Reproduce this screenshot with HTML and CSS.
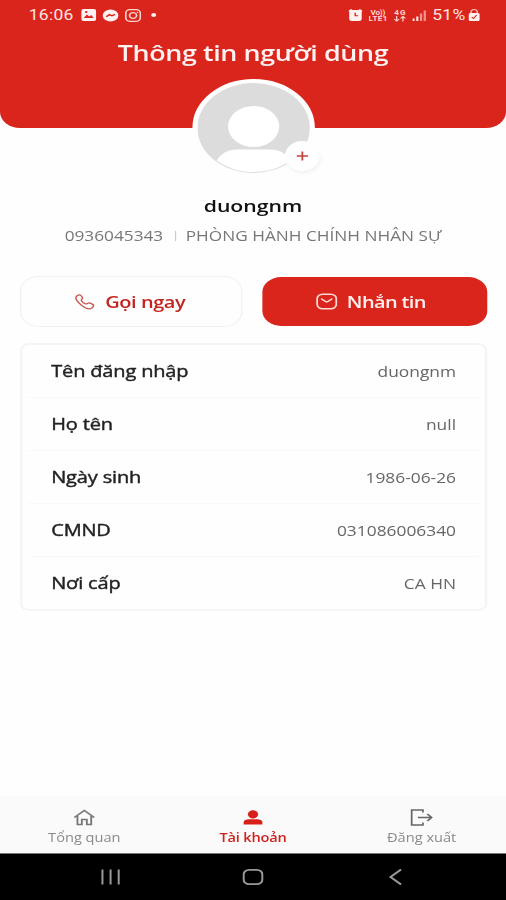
FILE: index.html
```html
<!DOCTYPE html>
<html lang="vi">
  <head>
    <meta charset="utf-8">
    <title>Thông tin người dùng</title>
    <meta name="viewport" content="width=device-width, initial-scale=1.0">
    <link rel="stylesheet" href="styles.css">
  </head>
  <body>
    <div class="screen">
      <header class="header">
        <div class="status">
          <div class="status-left">
            <span class="time">16:06</span>
            <svg width="12" height="12" viewBox="0 0 12 12">
              <rect width="12" height="12" rx="2" fill="#fff2f0"/>
              <path d="M2 9l2.5-3.5 2 2 1.5-1.5L10 9z" fill="#da251d"/>
              <circle cx="4" cy="3" r="1" fill="#da251d"/>
            </svg>
            <svg width="13" height="13" viewBox="0 0 13 13">
              <ellipse cx="6.5" cy="6.4" rx="6.3" ry="6" fill="#fff2f0"/>
              <path d="M3 7.8l2.6-2.2 2 1.2L10 5.4" fill="none" stroke="#da251d" stroke-width="1.4"/>
            </svg>
            <svg width="13" height="13" viewBox="0 0 13 13" fill="none" stroke="#fbd5d0" stroke-width="1.3">
              <rect x=".7" y=".7" width="11.6" height="11.6" rx="3.2"/>
              <circle cx="6.5" cy="6.5" r="2.8"/>
              <path d="M9.5 3.3h1"/>
            </svg>
            <span class="dot"></span>
          </div>
          <div class="status-right">
            <svg width="11" height="12" viewBox="0 0 11 12">
              <rect x=".5" y="1" width="10" height="11" rx="2" fill="#fff2f0"/>
              <path d="M0 2.5L2.5.5M8.5.5L11 2.5" stroke="#fff2f0" stroke-width="1.4"/>
              <path d="M5.3 3.8v3h2.4" fill="none" stroke="#da251d" stroke-width="1.1"/>
            </svg>
            <svg class="volte" width="15" height="13" viewBox="0 0 15 13">
              <text x="1.5" y="5.8" textLength="12">Vo))</text>
              <text x="0" y="12.3" textLength="15">LTE1</text>
            </svg>
            <svg class="volte" width="10" height="13" viewBox="0 0 10 13">
              <text x=".5" y="6" textLength="9">4G</text>
              <path d="M2.5 7v5M.5 10l2 2 2-2M7.5 12.5v-5M5.5 9.5l2-2 2 2" fill="none" stroke="#fbd5d0"/>
            </svg>
            <svg width="11" height="12" viewBox="0 0 11 12">
              <path d="M1 12V9.5M4 12V7.5" stroke="#fff2f0" stroke-width="1.6"/>
              <path d="M7 12V4.5M10 12V1.5" stroke="#ee938d" stroke-width="1.8"/>
            </svg>
            <span class="percent">51%</span>
            <svg width="9" height="12" viewBox="0 0 9 12">
              <path d="M2 5V3a2.5 2.5 0 0 1 5 0v2" fill="none" stroke="#f6b6b0" stroke-width="1.2"/>
              <rect y="4" width="9" height="8" rx="1.5" fill="#fff2f0"/>
              <path d="M2.5 8L4 9.5 6.5 6" fill="none" stroke="#da251d"/>
            </svg>
          </div>
        </div>
        <h1 class="title">Thông tin người dùng</h1>
      </header>

      <section class="profile">
        <div class="avatar">
          <svg width="90" height="90" viewBox="0 0 90 90">
            <clipPath id="face"><circle cx="45" cy="45" r="44"/></clipPath>
            <circle cx="45" cy="45" r="45" fill="#dcdcdd"/>
            <circle cx="45" cy="43.5" r="20.5" fill="#fff"/>
            <rect x="14" y="66.5" width="62" height="40" rx="18" fill="#fff" clip-path="url(#face)"/>
          </svg>
          <span class="add">
            <svg width="10" height="10" viewBox="0 0 10 10" stroke="#c4403c" stroke-width="1.4">
              <path d="M5 .5v9M.5 5h9"/>
            </svg>
          </span>
        </div>
        <div class="name">duongnm</div>
        <div class="info">
          <span>0936045343</span>
          <span class="sep"></span>
          <span>PHÒNG HÀNH CHÍNH NHÂN SỰ</span>
        </div>
      </section>

      <div class="actions">
        <button class="btn call">
          <svg width="16" height="16" viewBox="0 0 17 17" fill="none" stroke="#c65550" stroke-width="1.3" stroke-linejoin="round">
            <path d="M1.2 2.8C2 1.2 3.6.6 4.6 1.2c1.2 1 2 2.4 1.8 3.4-.2.8-1.2 1.2-1 2.2.4 1.400 2.400 3.400 3.800 3.800 1 .2 1.400-.8 2.200-1 1-.2 2.800.6 4 1.800.8.9.2 2.600-1.400 3.800-2 1.200-5.200 0-8.600-3.400S0 4.800 1.200 2.800z"/>
          </svg>
          <span>Gọi ngay</span>
        </button>
        <button class="btn message">
          <svg width="17" height="17" viewBox="0 0 17 17" fill="none" stroke="#ffd9d5" stroke-width="1.5" stroke-linecap="round">
            <rect x=".8" y="1.2" width="15.4" height="14.6" rx="4.5"/>
            <path d="M4.5 6l2.7 2.3c.8.7 1.8.7 2.6 0L12.500 6"/>
          </svg>
          <span>Nhắn tin</span>
        </button>
      </div>

      <div class="card">
        <div class="row"><span class="label">Tên đăng nhập</span><span class="value">duongnm</span></div>
        <div class="row"><span class="label">Họ tên</span><span class="value">null</span></div>
        <div class="row"><span class="label">Ngày sinh</span><span class="value">1986-06-26</span></div>
        <div class="row"><span class="label">CMND</span><span class="value">031086006340</span></div>
        <div class="row"><span class="label">Nơi cấp</span><span class="value">CA HN</span></div>
      </div>

      <nav class="tabs">
        <a class="tab">
          <svg width="17" height="17" viewBox="0 0 17 17" fill="none" stroke="#777" stroke-width="1.5">
            <path d="M.5 8.5l8-7 8 7M3 7v8.5h3.5v-5h4v5H14V7"/>
          </svg>
          <span>Tổng quan</span>
        </a>
        <a class="tab active">
          <svg width="17" height="17" viewBox="0 0 17 17" fill="#d8201a">
            <circle cx="8.5" cy="5.3" r="4.1"/>
            <path d="M1 15.5v-2C1 11.5 3 10.3 5.5 10.3h6c2.5 0 4.5 1.2 4.5 3.2v2z"/>
          </svg>
          <span>Tài khoản</span>
        </a>
        <a class="tab">
          <svg width="19" height="17" viewBox="0 0 19 17" fill="none" stroke="#666" stroke-width="1.4">
            <path d="M10.5 3.5V1h-9v15h9v-2.5M6.5 8.5h11M14 5l3.5 3.5L14 12"/>
          </svg>
          <span>Đăng xuất</span>
        </a>
      </nav>

      <div class="android">
        <svg width="17" height="18" viewBox="0 0 17 18" stroke="#999" stroke-width="1.6">
          <path d="M2 1.5v15M8.5 1.5v15M15 1.5v15"/>
        </svg>
        <svg width="17" height="18" viewBox="0 0 17 18" fill="none" stroke="#999" stroke-width="1.7">
          <rect x="1" y="1.8" width="15" height="14.4" rx="4.5"/>
        </svg>
        <svg width="17" height="18" viewBox="0 0 17 18" fill="none" stroke="#999" stroke-width="1.7">
          <path d="M13 1.5L4.5 9l8.5 7.5"/>
        </svg>
      </div>
    </div>
  </body>
</html>
```
FILE: styles.css
```css
* {
  box-sizing: border-box;
}

body {
  margin: 0;
  overflow: hidden;
  background-color: #fefefe;
  font-family: "Open Sans", "Noto Sans", sans-serif;
}

svg {
  display: block;
  flex: none;
}

.screen {
  width: 405px;
  height: 900px;
  display: flex;
  flex-direction: column;
  transform: scaleX(1.2494);
  transform-origin: 0 0;
}

.header {
  height: 128px;
  flex: none;
  background-color: #da251d;
  border-radius: 0 0 16px 16px;
}

.status {
  display: flex;
  justify-content: space-between;
  height: 30px;
  padding: 0 21px 0 23px;
  font-family: Roboto, sans-serif;
  font-size: 14px;
  color: #ffe6e3;
}

.status-left, .status-right {
  display: flex;
  align-items: center;
  gap: 5px;
}

.time {
  width: 37px;
  letter-spacing: 0.2px;
}

.dot {
  width: 4px;
  height: 4px;
  margin-left: 3px;
  border-radius: 50%;
  background-color: #fff2f0;
}

.percent {
  width: 26px;
  margin-right: -2px;
  letter-spacing: 0.2px;
}

.volte {
  font-size: 6.5px;
  font-weight: 700;
  fill: #fbd5d0;
}

.title {
  margin: 5px 0 0;
  font-size: 21.5px;
  line-height: 36px;
  font-weight: 600;
  letter-spacing: -0.32px;
  text-align: center;
  color: #fff2f0;
}

.profile {
  display: flex;
  flex-direction: column;
  align-items: center;
  height: 197px;
  margin-top: -49px;
  flex: none;
}

.avatar {
  position: relative;
  flex: none;
  border: 4px solid #fefefe;
  border-radius: 50%;
  background-color: #fefefe;
}

.add {
  position: absolute;
  right: -8px;
  bottom: 2px;
  width: 28px;
  height: 30px;
  display: flex;
  align-items: center;
  justify-content: center;
  border-radius: 50%;
  background-color: #fefefe;
  box-shadow: 1px 3px 3px #f4f4f4;
}

.name {
  margin-top: 15px;
  font-size: 17px;
  line-height: 27px;
  font-weight: 600;
  color: #111;
}

.info {
  display: flex;
  align-items: center;
  margin-top: 7px;
  font-size: 13.8px;
  line-height: 20px;
  color: #777;
}

.sep {
  width: 1px;
  height: 10px;
  margin: 0 8px 0 9px;
  background-color: #ccc;
}

.actions {
  display: flex;
  gap: 16px;
  height: 51px;
  padding: 0 15px 0 16px;
  flex: none;
}

.btn {
  flex: 1;
  display: flex;
  align-items: center;
  justify-content: center;
  gap: 8px;
  padding: 0 1px 0 0;
  border: 1px solid #f1f1f3;
  border-radius: 15px;
  background-color: #fefefe;
  color: #c4241f;
  font-family: inherit;
  font-size: 16px;
  font-weight: 600;
  letter-spacing: -0.35px;
}

.message {
  margin: 1px 0;
  padding-right: 6px;
  border: none;
  background-color: #da251d;
  color: #ffefed;
  letter-spacing: -0.5px;
}

.card {
  height: 268px;
  margin: 16px 15px 0 16px;
  flex: none;
  border: 2px solid #f5f5f6;
  border-radius: 7px;
  display: flex;
  flex-direction: column;
}

.row {
  flex: 1;
  display: flex;
  align-items: center;
  justify-content: space-between;
  margin: 0 5px;
  padding: 0 18px;
  border-bottom: 1px solid #f8f8f8;
}

.row:last-child {
  border-bottom: none;
}

.label {
  font-size: 16px;
  letter-spacing: -0.13px;
  color: #222;
  -webkit-text-stroke: 0.4px #222;
}

.value {
  font-size: 13.9px;
  color: #666;
}

.tabs {
  display: flex;
  height: 57px;
  margin-top: auto;
  background-color: #fafafa;
}

.tab {
  flex: 1;
  display: flex;
  flex-direction: column;
  align-items: center;
  padding-top: 13px;
  font-size: 11.7px;
  line-height: 18px;
  color: #8a8a8a;
}

.tab span {
  margin-top: 2px;
}

.active {
  color: #cf231d;
  font-weight: 600;
  letter-spacing: -0.15px;
}

.android {
  display: flex;
  align-items: center;
  justify-content: space-between;
  height: 47px;
  padding: 0 80px 1px;
  border-top: 1px solid #777;
  background-color: #000;
}
```
